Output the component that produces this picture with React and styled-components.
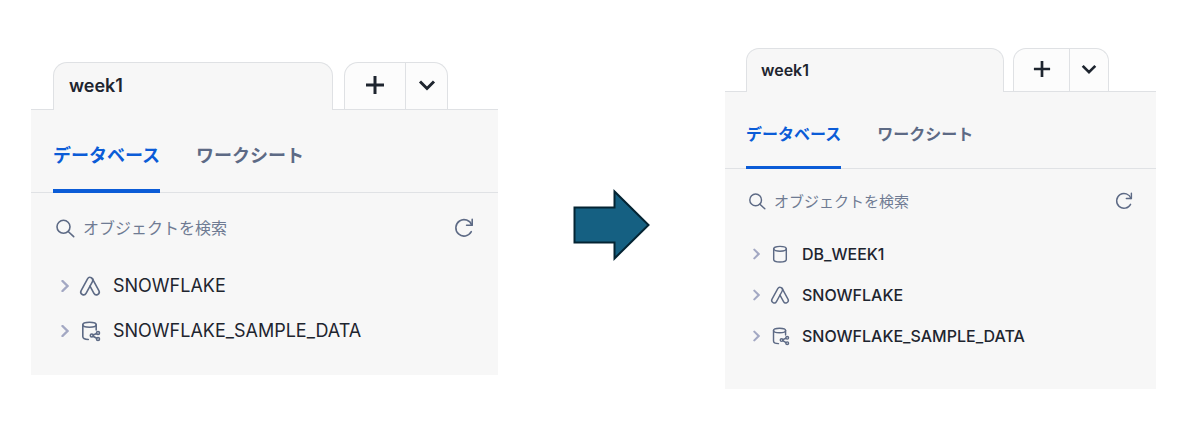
import React, { useState } from "react"
import styled, { createGlobalStyle, ThemeProvider } from "styled-components"

const regular = {
  tabHeight: 47,
  tabRadius: 14,
  tabText: 18,
  tabPadding: 15,
  stripPadding: 22,
  stripGap: 11,
  addWidth: 60,
  moreWidth: 42,
  navHeight: 83,
  navText: 18,
  navGap: 36,
  underline: 4,
  searchHeight: 70,
  searchText: 16,
  searchPadding: 24,
  rowHeight: 45,
  rowText: 18,
  rowWeight: 400,
  rowPadding: 30,
  rowGap: 11,
  chevron: 8,
  icon: 20,
  bottom: 22,
}

const compact = {
  tabHeight: 43,
  tabRadius: 13,
  tabText: 16,
  tabPadding: 14,
  stripPadding: 21,
  stripGap: 9,
  addWidth: 55,
  moreWidth: 39,
  navHeight: 77,
  navText: 16,
  navGap: 36,
  underline: 3,
  searchHeight: 64,
  searchText: 15,
  searchPadding: 23,
  rowHeight: 41,
  rowText: 16,
  rowWeight: 500,
  rowPadding: 28,
  rowGap: 11,
  chevron: 7,
  icon: 18,
  bottom: 33,
}

const Icon = ({ children, ...props }) => (
  <Glyph viewBox="0 0 20 20" aria-hidden="true" {...props}>
    {children}
  </Glyph>
)

const SearchIcon = () => (
  <Icon>
    <circle cx="8.5" cy="8.8" r="6.5" />
    <path d="M13.2 13.5L18.7 18.7" />
  </Icon>
)

const RefreshIcon = () => (
  <Icon>
    <path d="M17.3 13.7A8.2 8.2 0 1 1 17.8 7.2" />
    <path d="M18.2 1.4V7.2H12.6" />
  </Icon>
)

const AppIcon = () => (
  <Icon>
    <path d="M7.54 2.86L1.14 14.66A2.8 2.8 0 0 0 6.06 17.34L12.46 5.54A2.8 2.8 0 0 0 7.54 2.86Z" />
    <path d="M12.46 2.86L18.86 14.66A2.8 2.8 0 0 1 13.94 17.34L10 10.1" />
  </Icon>
)

const DatabaseIcon = () => (
  <Icon>
    <ellipse cx="10" cy="4.2" rx="7" ry="2.7" />
    <path d="M3 4.2V16C3 17.6 6 18.8 10 18.8S17 17.6 17 16V4.2" />
  </Icon>
)

const SharedIcon = () => (
  <Icon>
    <ellipse cx="9.5" cy="3.8" rx="6.7" ry="2.5" />
    <path d="M2.8 3.8V15.6C2.8 17.4 5 18.5 8.3 18.5M16.2 3.8V9" />
    <circle cx="11.8" cy="14.5" r="1.5" />
    <circle cx="18" cy="12" r="1.5" />
    <circle cx="18" cy="18" r="1.5" />
    <path d="M13.2 14L16.6 12.5M13.1 15.2L16.7 17.3" />
  </Icon>
)

const icons = { database: DatabaseIcon, app: AppIcon, shared: SharedIcon }

const Panel = ({ id, sizes, databases }) => {
  const [current, setCurrent] = useState("databases")
  const [query, setQuery] = useState("")

  return (
    <ThemeProvider theme={sizes}>
      <section>
        <Strip>
          <FileTab type="button">week1</FileTab>
          <Actions>
            <AddButton type="button" aria-label="追加">
              <svg width="20" height="20" viewBox="0 0 20 20">
                <path d="M10 1V19M1 10H19" />
              </svg>
            </AddButton>
            <MoreButton type="button" aria-label="メニュー">
              <svg width="20" height="20" viewBox="0 0 20 20">
                <path d="M3 6.5L10 13.5L17 6.5" />
              </svg>
            </MoreButton>
          </Actions>
        </Strip>
        <Body>
          <Nav>
            <NavButton
              type="button"
              $active={current === "databases"}
              onClick={() => setCurrent("databases")}
            >
              データベース
            </NavButton>
            <NavButton
              type="button"
              $active={current === "worksheets"}
              onClick={() => setCurrent("worksheets")}
            >
              ワークシート
            </NavButton>
          </Nav>
          <Search>
            <label htmlFor={id} aria-label="オブジェクトを検索">
              <SearchIcon />
            </label>
            <input
              id={id}
              type="text"
              value={query}
              placeholder="オブジェクトを検索"
              onChange={(e) => setQuery(e.target.value)}
            />
            <button type="button" aria-label="更新">
              <RefreshIcon />
            </button>
          </Search>
          <List>
            {databases.map(({ name, kind }) => {
              const KindIcon = icons[kind]
              return (
                <li key={name}>
                  <Row type="button">
                    <Chevron viewBox="0 0 8 12" aria-hidden="true">
                      <path d="M1.5 1L6.5 6L1.5 11" />
                    </Chevron>
                    <KindIcon />
                    <span>{name}</span>
                  </Row>
                </li>
              )
            })}
          </List>
        </Body>
      </section>
    </ThemeProvider>
  )
}

const before = [
  { name: "SNOWFLAKE", kind: "app" },
  { name: "SNOWFLAKE_SAMPLE_DATA", kind: "shared" },
]

const after = [{ name: "DB_WEEK1", kind: "database" }, ...before]

const App = () => (
  <>
    <GlobalStyle />
    <Page>
      <Panel id="search-before" sizes={regular} databases={before} />
      <Arrow>
        <svg width="78" height="72" viewBox="0 0 78 72" aria-hidden="true">
          <path d="M1.5 18.5H41.5V2.5L75.5 36L41.5 69.5V53.5H1.5Z" />
        </svg>
      </Arrow>
      <Panel id="search-after" sizes={compact} databases={after} />
    </Page>
  </>
)

const GlobalStyle = createGlobalStyle`
  * {
    box-sizing: border-box;
  }

  body {
    margin: 0;
    background-color: #ffffff;
  }

  body,
  button,
  input {
    font-family: Inter, "Noto Sans CJK JP", sans-serif;
  }

  button {
    margin: 0;
    padding: 0;
    border: none;
    background: none;
    cursor: pointer;
  }
`

const Page = styled.main`
  display: grid;
  align-items: center;
  padding: 48px 44px 57px 31px;
  grid-template-columns: 467fr 227fr 431fr;
`

const Arrow = styled.div`
  display: flex;
  padding-top: 13px;
  justify-content: center;

  path {
    fill: #156082;
    stroke: #042433;
    stroke-width: 2;
  }
`

const Glyph = styled.svg`
  fill: none;
  flex: none;
  display: block;
  stroke: #5d6a85;
  overflow: visible;
  stroke-width: 1.6;
  stroke-linecap: round;
  stroke-linejoin: round;
  width: ${({ theme }) => theme.icon}px;
  height: ${({ theme }) => theme.icon}px;
`

const Strip = styled.div`
  display: flex;
  gap: ${({ theme }) => theme.stripGap}px;
  height: ${({ theme }) => theme.tabHeight}px;
  padding-left: ${({ theme }) => theme.stripPadding}px;
`

const FileTab = styled.button`
  && {
    z-index: 1;
    flex: 0 0 63%;
    color: #1e252f;
    font-weight: 600;
    text-align: left;
    position: relative;
    margin-bottom: -1px;
    border: 1px solid #dfe1e4;
    border-bottom: none;
    background-color: #f7f7f7;
    font-size: ${({ theme }) => theme.tabText}px;
    padding: 0 ${({ theme }) => theme.tabPadding}px 2px;
    border-radius: ${({ theme }) => `${theme.tabRadius}px ${theme.tabRadius}px`} 0 0;
  }
`

const Actions = styled.div`
  display: flex;
  overflow: hidden;
  border: 1px solid #dfe1e4;
  border-bottom: none;
  background-color: #fcfcfc;
  border-radius: ${({ theme }) => `${theme.tabRadius}px ${theme.tabRadius}px`} 0 0;

  svg {
    fill: none;
    stroke: #1e252f;
    stroke-width: 3;
    width: ${({ theme }) => theme.icon}px;
    height: ${({ theme }) => theme.icon}px;
  }
`

const ActionButton = styled.button`
  && {
    display: flex;
    align-items: center;
    padding-bottom: 2px;
    justify-content: center;
  }
`

const AddButton = styled(ActionButton)`
  width: ${({ theme }) => theme.addWidth}px;
`

const MoreButton = styled(ActionButton)`
  && {
    border-left: 1px solid #dfe1e4;
    width: ${({ theme }) => theme.moreWidth}px;
  }
`

const Body = styled.div`
  background-color: #f7f7f7;
  border-top: 1px solid #dfe1e4;
  padding-bottom: ${({ theme }) => theme.bottom}px;
`

const Nav = styled.nav`
  display: flex;
  border-bottom: 1px solid #e0e2e5;
  gap: ${({ theme }) => theme.navGap}px;
  height: ${({ theme }) => theme.navHeight}px;
  padding-left: ${({ theme }) => theme.stripPadding}px;
`

const NavButton = styled.button`
  && {
    font-weight: 700;
    padding-top: 8px;
    margin-bottom: -1px;
    color: ${({ $active }) => ($active ? "#0b5cd7" : "#5d6a85")};
    font-size: ${({ theme }) => theme.navText}px;
    border-bottom: ${({ theme }) => theme.underline}px solid
      ${({ $active }) => ($active ? "#0b5cd7" : "transparent")};
  }
`

const Search = styled.div`
  gap: 8px;
  display: flex;
  align-items: center;
  height: ${({ theme }) => theme.searchHeight}px;
  padding: 0 ${({ theme }) => theme.searchPadding}px;

  input {
    flex: 1;
    padding: 0;
    min-width: 0;
    border: none;
    outline: none;
    color: #1e252f;
    background: none;
    font-size: ${({ theme }) => theme.searchText}px;

    &::placeholder {
      opacity: 1;
      color: #6f7b93;
    }
  }
`

const List = styled.ul`
  margin: 0;
  padding: 0;
  list-style: none;
`

const Row = styled.button`
  && {
    width: 100%;
    display: flex;
    color: #1e252f;
    align-items: center;
    gap: ${({ theme }) => theme.rowGap}px;
    height: ${({ theme }) => theme.rowHeight}px;
    font-size: ${({ theme }) => theme.rowText}px;
    font-weight: ${({ theme }) => theme.rowWeight};
    padding-left: ${({ theme }) => theme.rowPadding}px;
  }

  span {
    padding-left: 2px;
  }
`

const Chevron = styled.svg`
  fill: none;
  flex: none;
  height: 12px;
  stroke: #a3a8c3;
  stroke-width: 2.4;
  stroke-linecap: round;
  width: ${({ theme }) => theme.chevron}px;
`

export default App
